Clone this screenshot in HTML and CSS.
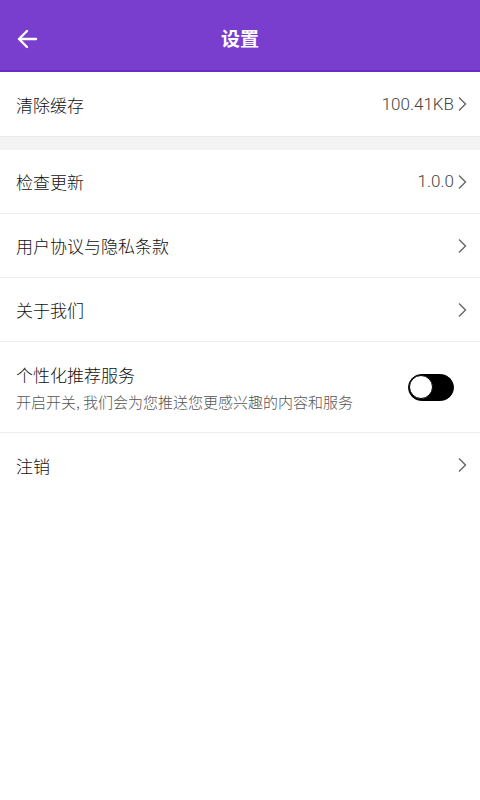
FILE: index.html
```html
<!DOCTYPE html>
<html lang="zh">
<head>
<meta charset="utf-8">
<link rel="stylesheet" href="styles.css">
</head>
<body>
<div class="header">
  <div class="back">
    <svg width="22" height="22" viewBox="0 0 22 22"><path d="M20 11H3M11 3L3 11L11 19" fill="none" stroke="#fff" stroke-width="2.4" stroke-linecap="round" stroke-linejoin="round"/></svg>
  </div>
  <div class="title">设置</div>
</div>
<div class="row">
  <span class="label">清除缓存</span>
  <span class="right"><span class="value">100.41KB</span><svg class="chev" width="10" height="16" viewBox="0 0 10 16"><path d="M2 1.5L8.5 8L2 14.5" fill="none" stroke="#666" stroke-width="1.4"/></svg></span>
</div>
<div class="gap"></div>
<div class="row line">
  <span class="label">检查更新</span>
  <span class="right"><span class="value">1.0.0</span><svg class="chev" width="10" height="16" viewBox="0 0 10 16"><path d="M2 1.5L8.5 8L2 14.5" fill="none" stroke="#666" stroke-width="1.4"/></svg></span>
</div>
<div class="row line">
  <span class="label">用户协议与隐私条款</span>
  <span class="right"><svg class="chev" width="10" height="16" viewBox="0 0 10 16"><path d="M2 1.5L8.5 8L2 14.5" fill="none" stroke="#666" stroke-width="1.4"/></svg></span>
</div>
<div class="row line">
  <span class="label">关于我们</span>
  <span class="right"><svg class="chev" width="10" height="16" viewBox="0 0 10 16"><path d="M2 1.5L8.5 8L2 14.5" fill="none" stroke="#666" stroke-width="1.4"/></svg></span>
</div>
<div class="row tall line">
  <div class="texts">
    <span class="label">个性化推荐服务</span>
    <span class="sub">开启开关, 我们会为您推送您更感兴趣的内容和服务</span>
  </div>
  <div class="toggle"><div class="knob"></div></div>
</div>
<div class="row">
  <span class="label">注销</span>
  <span class="right"><svg class="chev" width="10" height="16" viewBox="0 0 10 16"><path d="M2 1.5L8.5 8L2 14.5" fill="none" stroke="#666" stroke-width="1.4"/></svg></span>
</div>
</body>
</html>
```
FILE: styles.css
```css
html, body {
  margin: 0;
  padding: 0;
  background: #fff;
  font-family: "Noto Sans CJK SC", "Noto Sans", sans-serif;
  color: #111;
}
.header {
  height: 70px;
  background: #7a3ecf;
  border-bottom: 2px solid #6a2ec2;
  display: flex;
  align-items: center;
  justify-content: center;
  position: relative;
}
.back {
  position: absolute;
  left: 16px;
  top: 28px;
  width: 22px;
  height: 22px;
  display: flex;
}
.title {
  color: #fff;
  font-size: 19px;
  font-weight: 700;
  line-height: 1;
  margin-top: 4px;
}
.row {
  height: 64px;
  display: flex;
  align-items: center;
  justify-content: space-between;
  padding: 0 13px 0 16px;
  box-sizing: border-box;
}
.line {
  border-bottom: 1px solid #eeeeee;
}
.tall {
  height: 91px;
}
.label {
  font-size: 17px;
  line-height: 1;
  color: #111;
  font-weight: 300;
}
.right {
  display: flex;
  align-items: center;
  gap: 3px;
}
.value {
  font-family: Roboto, "Noto Sans", sans-serif;
  font-size: 17px;
  font-weight: 300;
  color: #444;
  line-height: 1;
}
.chev {
  display: block;
}
.gap {
  height: 14px;
  background: #f3f3f3;
  border-top: 1px solid #ececec;
  box-sizing: border-box;
}
.texts {
  display: flex;
  flex-direction: column;
  gap: 11px;
}
.sub {
  font-size: 15px;
  color: #555;
  line-height: 1;
  font-weight: 300;
}
.toggle {
  width: 46px;
  height: 27px;
  border-radius: 14px;
  background: #000;
  box-sizing: border-box;
  border: 1.5px solid #000;
  margin-right: 13px;
  display: flex;
  align-items: center;
}
.knob {
  width: 24px;
  height: 24px;
  border-radius: 50%;
  background: #fff;
  box-sizing: border-box;
  border: 1.5px solid #000;
}
```
